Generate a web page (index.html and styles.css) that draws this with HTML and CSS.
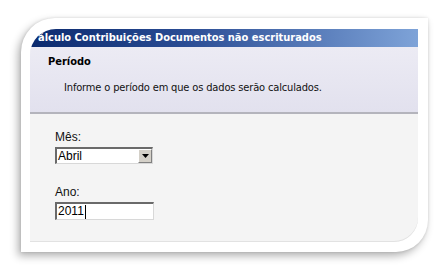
FILE: index.html
```html
<!DOCTYPE html>
<html>
<head>
<meta charset="utf-8">
<link rel="stylesheet" href="styles.css">
</head>
<body>
<div class="stage">
  <div class="card">
    <div class="panel">
      <div class="titlebar">álculo Contribuições Documentos não escriturados</div>
      <div class="header">
        <div class="h-title">Período</div>
        <div class="h-desc">Informe o período em que os dados serão calculados.</div>
      </div>
      <div class="body">
        <div class="label">Mês:</div>
        <div class="combo">
          <span class="combo-text">Abril</span>
          <span class="combo-btn">
            <svg width="7" height="4" viewBox="0 0 7 4"><path d="M0 0h7L3.5 4z" fill="#000"/></svg>
          </span>
        </div>
        <div class="label label-2">Ano:</div>
        <div class="textbox"><span>2011</span><span class="caret"></span></div>
      </div>
    </div>
  </div>
</div>
</body>
</html>
```
FILE: styles.css
```css
html, body {
  margin: 0;
  padding: 0;
  background: #ffffff;
}
.stage {
  width: 447px;
  height: 271px;
  padding: 18px 0 0 21px;
  box-sizing: border-box;
}
.card {
  width: 407px;
  height: 234px;
  box-sizing: border-box;
  padding: 11px 10px 10px 9px;
  background: #ffffff;
  border-radius: 34px 0 32px 0;
  box-shadow: -3px 4px 9px rgba(0, 0, 0, 0.3), 0 0 3px rgba(0, 0, 0, 0.12);
}
.panel {
  width: 388px;
  height: 213px;
  border-radius: 26px 0 24px 0;
  overflow: hidden;
  background: #f4f4f4;
  display: flex;
  flex-direction: column;
  font-family: "DejaVu Sans Condensed", "DejaVu Sans", sans-serif;
  color: #000;
  box-shadow: inset 0 -1px 0 #e2e2e2;
}
.titlebar {
  height: 18px;
  flex: none;
  background: linear-gradient(to right, #0b2a6e 0%, #2a4c94 40%, #7ea3d8 100%);
  color: #fff;
  font-weight: bold;
  font-size: 11px;
  line-height: 18px;
  padding-left: 8px;
  white-space: nowrap;
}
.header {
  flex: none;
  height: 67px;
  box-sizing: border-box;
  background: linear-gradient(to bottom, #ecebf4 0%, #e2e1ee 100%);
  border-bottom: 2px solid #b4b4bc;
  padding: 8px 0 0 18px;
}
.h-title {
  font-weight: bold;
  font-size: 11px;
  line-height: 14px;
}
.h-desc {
  font-size: 11px;
  line-height: 14px;
  margin: 12px 0 0 16px;
  color: #111;
  letter-spacing: -0.15px;
}
.body {
  padding: 17px 0 0 25px;
  font-family: "Liberation Sans", sans-serif;
  font-size: 11px;
}
.label {
  line-height: 13px;
  height: 13px;
  color: #111;
  font-size: 12px;
}
.label-2 {
  margin-top: 22px;
}
.combo {
  margin-top: 3px;
  width: 98px;
  height: 17px;
  box-sizing: border-box;
  background: #fff;
  border-top: 2px solid #6a6a6a;
  border-left: 2px solid #6a6a6a;
  border-right: 1px solid #d8d8d8;
  border-bottom: 1px solid #d8d8d8;
  display: flex;
  align-items: stretch;
  font-size: 12px;
}
.combo-text {
  flex: 1;
  line-height: 14px;
  padding-left: 1px;
}
.combo-btn {
  width: 14px;
  flex: none;
  background: #d4d0c8;
  border-left: 1px solid #fff;
  border-top: 1px solid #fff;
  border-right: 1px solid #808080;
  border-bottom: 1px solid #808080;
  box-sizing: border-box;
  display: flex;
  align-items: center;
  justify-content: center;
}
.textbox {
  margin-top: 3px;
  width: 99px;
  height: 18px;
  box-sizing: border-box;
  background: #fff;
  border-top: 2px solid #6a6a6a;
  border-left: 2px solid #6a6a6a;
  border-right: 1px solid #d8d8d8;
  border-bottom: 1px solid #d8d8d8;
  display: flex;
  align-items: center;
  padding-left: 1px;
  line-height: 13px;
  font-size: 12px;
}
.caret {
  width: 1px;
  height: 14px;
  background: #000;
  margin-left: 1px;
}
```
